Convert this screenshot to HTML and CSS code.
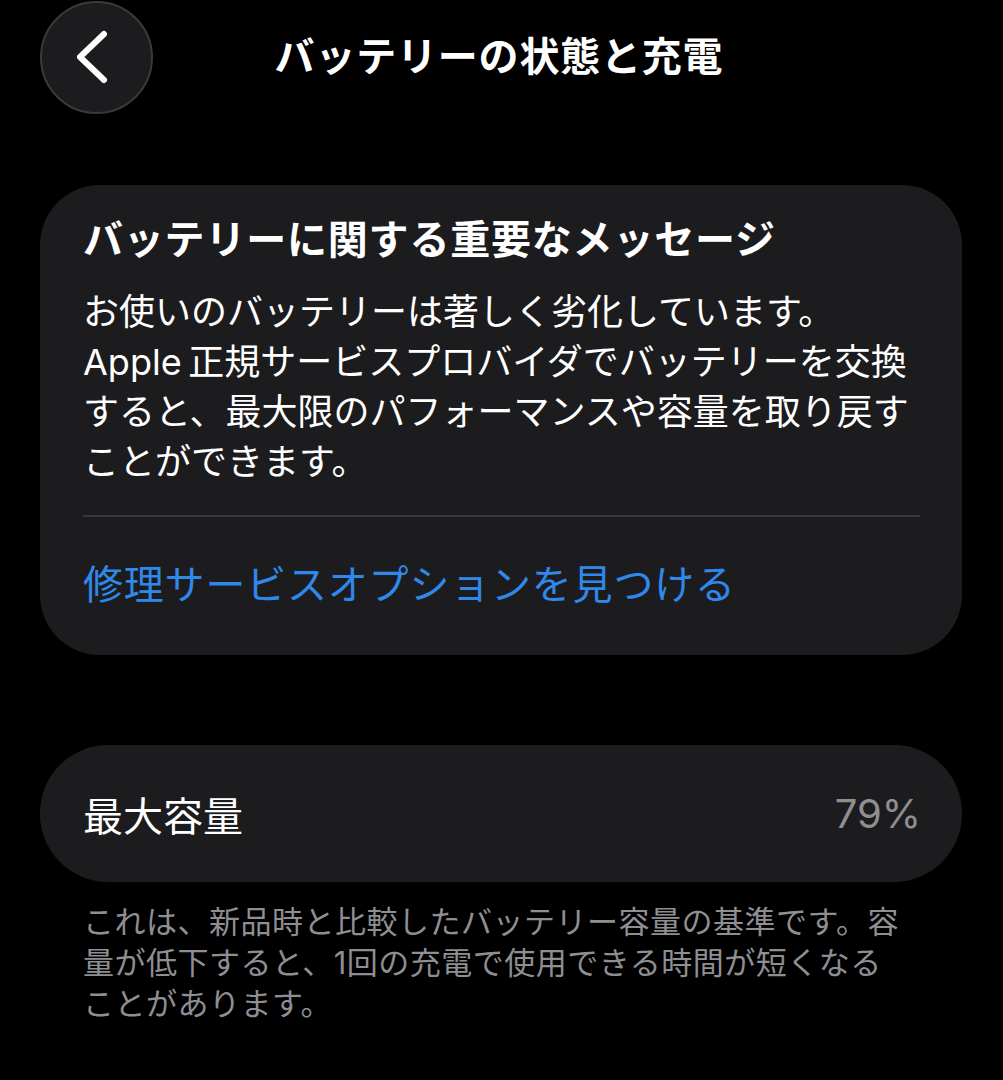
FILE: index.html
```html
<!DOCTYPE html>
<html lang="ja">
<head>
    <meta charset="UTF-8">
    <meta name="viewport" content="width=device-width, initial-scale=1.0">
    <title>バッテリーの状態と充電</title>
    <link rel="stylesheet" href="styles.css">
</head>
<body>
    <header class="nav">
        <button class="back" aria-label="戻る">
            <svg width="40" height="56" viewBox="0 0 40 56">
                <path d="M30 5 L6 28 L30 51" fill="none" stroke="#fff" stroke-width="6" stroke-linecap="round" stroke-linejoin="round"/>
            </svg>
        </button>
        <h1 class="title">バッテリーの状態と充電</h1>
        <div></div>
    </header>

    <section class="card message">
        <h2 class="card-title">バッテリーに関する重要なメッセージ</h2>
        <p class="card-body">お使いのバッテリーは著しく劣化しています。<br>Apple&thinsp;正規サービスプロバイダでバッテリーを交換<br>すると、最大限のパフォーマンスや容量を取り戻す<br>ことができます。</p>
        <div class="divider"></div>
        <a class="link" href="#">修理サービスオプションを見つける</a>
    </section>

    <section class="card capacity">
        <span class="label">最大容量</span>
        <span class="value">79%</span>
    </section>

    <p class="note">これは、新品時と比較したバッテリー容量の基準です。容<br>量が低下すると、1回の充電で使用できる時間が短くなる<br>ことがあります。</p>
</body>
</html>
```

FILE: styles.css
```css
body {
    background-color: #000; /* Black background */
    color: #fff;
    font-family: Inter, "Noto Sans CJK JP", sans-serif;
    margin: 0;
    padding: 0 41px 0 40px;
}

.nav {
    display: grid;
    grid-template-columns: 1fr auto 1fr;
    align-items: center;
    height: 114px;
}

.back {
    width: 113px;
    height: 113px;
    border-radius: 50%;
    background-color: #1c1c1e;
    border: 2px solid #3a3a3c;
    display: flex;
    align-items: center;
    justify-content: center;
    padding: 0 6px 0 0;
    cursor: pointer;
}

.title {
    margin: 0 0 0 -4px;
    font-size: 40px;
    font-weight: 700;
    line-height: 56px;
    letter-spacing: 0.8px;
}

.card {
    background-color: #1c1c1e; /* Dark card */
    border-radius: 60px;
}

.message {
    margin-top: 71px;
    padding: 27px 42px 42px 43px;
}

.card-title {
    margin: 0;
    font-size: 40px;
    font-weight: 700;
    line-height: 56px;
    letter-spacing: 0.8px;
}

.card-body {
    margin: 19px 0 0;
    font-size: 36px;
    line-height: 50px;
    white-space: nowrap;
}

.divider {
    height: 2px;
    background-color: #38383a;
    margin-top: 28px;
}

.link {
    display: block;
    margin-top: 40px;
    color: #2f88ea;
    text-decoration: none;
    font-size: 40px;
    line-height: 56px;
    letter-spacing: 0.8px;
}

.capacity {
    margin-top: 90px;
    height: 137px;
    border-radius: 68px;
    padding: 0 43px;
    display: flex;
    align-items: center;
    justify-content: space-between;
    font-size: 40px;
}

.value {
    color: #8e8e93;
    margin-right: -2px;
}

.note {
    margin: 19px 0 0 43px;
    color: #8e8e93;
    font-size: 31px;
    line-height: 41px;
    letter-spacing: 0.5px;
    white-space: nowrap;
}
```
